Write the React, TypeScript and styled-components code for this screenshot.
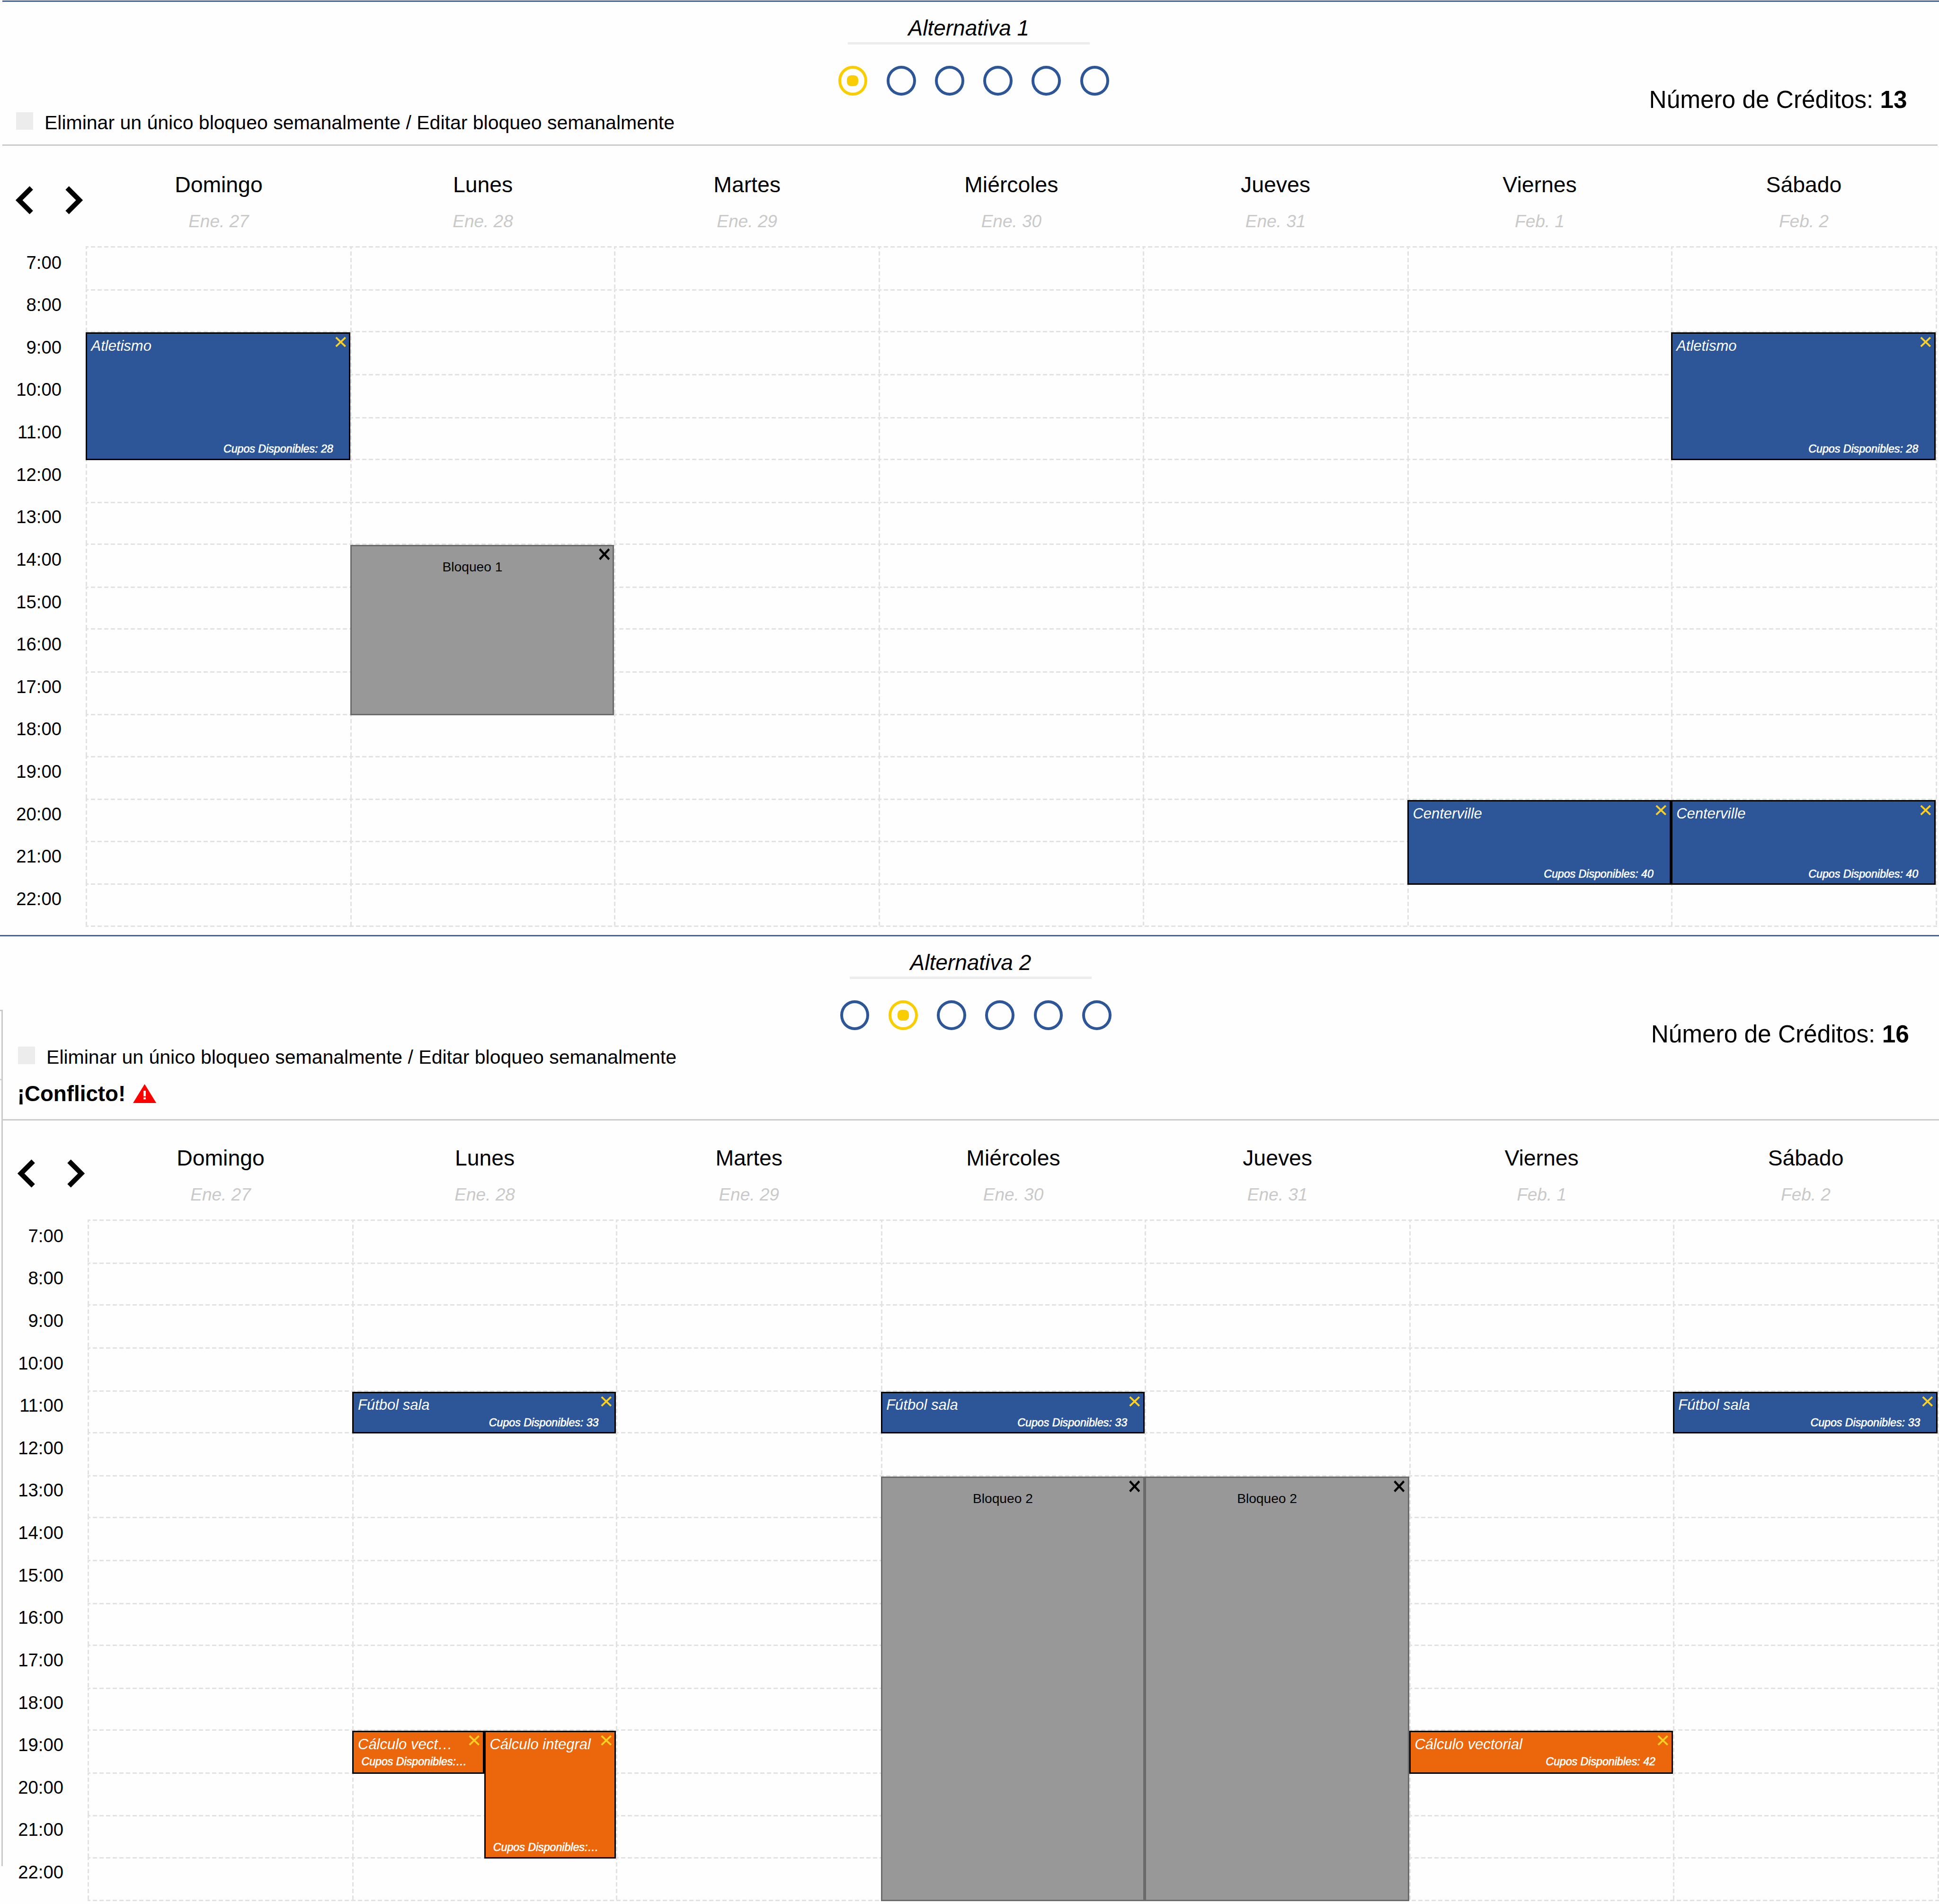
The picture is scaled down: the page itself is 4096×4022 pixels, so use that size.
import React from 'react';
import styled, { createGlobalStyle } from 'styled-components';

const K = 4096 / 4507;
const px = (n: number) => `${+(n * K).toFixed(2)}px`;

const COLORS = {
  blue: '#2c5697',
  rule: '#3e65a5',
  yellow: '#f9cd00',
  close: '#fbd022',
  orange: '#ec670c',
  gray: '#989898',
  grayEdge: '#6b6b6b',
  line: '#cacaca',
  grid: '#e2e2e2',
  soft: '#ececec',
};

const DAY_TRACKS = [615.6, 612.6, 615.6, 613, 615.3, 612.6, 615.3].map(px).join(' ');

const GlobalStyle = createGlobalStyle`
  html, body { margin: 0; padding: 0; background: #fefefe; }
  body { overflow: hidden; }
  * { box-sizing: border-box; }
`;

const Page = styled.main`
  width: 4096px;
  height: 4022px;
  overflow: hidden;
  position: relative;
  padding-top: 1px;
  background: #fefefe;
  color: #000;
  font-family: 'Liberation Sans', Arial, sans-serif;
  white-space: nowrap;
`;

const Section = styled.section<{ $inset: number; $height: number }>`
  height: ${(p) => px(p.$height)};
  padding-left: ${(p) => px(p.$inset)};
`;

const TopRule = styled.div<{ $bleed: number }>`
  height: 3px;
  margin-left: ${(p) => px(-p.$bleed)};
  background: ${COLORS.rule};
`;

const Header = styled.header<{ $height: number; $shift: number }>`
  display: grid;
  grid-template-columns: 1fr auto 1fr;
  width: ${(p) => px(4498.5 + p.$shift)};
  height: ${(p) => px(p.$height)};
  padding-left: ${(p) => px(p.$shift)};
  border-bottom: 3px solid ${COLORS.line};
`;

const Options = styled.div`
  display: flex;
  flex-direction: column;
  padding: ${px(250.7)} 0 0 ${px(32)};
`;

const CheckRow = styled.label`
  display: flex;
  align-items: flex-start;
  gap: ${px(26)};
  height: ${px(60)};
  font-size: ${px(45.12)};
  line-height: ${px(60)};
`;

const CheckBox = styled.span`
  width: ${px(40)};
  height: ${px(41)};
  margin-top: ${px(5.5)};
  background: ${COLORS.soft};
`;

const ConflictRow = styled.div`
  display: flex;
  align-items: flex-start;
  gap: ${px(17)};
  margin: ${px(20.5)} 0 0 ${px(-1.5)};
  font-size: ${px(50.3)};
  font-weight: 700;
  line-height: ${px(70)};
  svg {
    width: ${px(54)};
    height: ${px(44)};
    margin-top: ${px(12.5)};
  }
`;

const Picker = styled.div`
  display: flex;
  flex-direction: column;
  align-items: center;
  margin-right: ${px(6)};
`;

const PlanName = styled.h2`
  width: ${px(562.5)};
  margin: ${px(29)} 0 0;
  border-bottom: ${px(6.3)} solid ${COLORS.soft};
  font-size: ${px(50.6)};
  font-style: italic;
  font-weight: 400;
  line-height: ${px(65)};
  text-align: center;
`;

const Radios = styled.div`
  display: flex;
  gap: ${px(44.5)};
  margin: ${px(49)} 0 0 ${px(23.5)};
`;

const Radio = styled.span<{ $on: boolean }>`
  display: grid;
  place-items: center;
  width: ${px(68)};
  height: ${px(69)};
  border: ${px(6.6)} solid ${(p) => (p.$on ? COLORS.yellow : COLORS.blue)};
  border-radius: 50%;
  &::after {
    content: '';
    width: ${px(26.5)};
    height: ${px(25)};
    border-radius: 38%;
    background: ${(p) => (p.$on ? COLORS.yellow : 'transparent')};
  }
`;

const Credits = styled.p`
  margin: 0;
  padding: ${px(188)} ${px(71)} 0 0;
  font-size: ${px(56.5)};
  line-height: ${px(80)};
  text-align: right;
`;

const DayBar = styled.div<{ $height: number; $shift: number }>`
  display: grid;
  grid-template-columns: ${px(193.6)} ${DAY_TRACKS};
  align-items: end;
  height: ${(p) => px(p.$height)};
  padding-left: ${(p) => px(p.$shift)};
`;

const Arrows = styled.nav`
  display: flex;
  justify-content: space-between;
  padding: 0 ${px(6.6)} ${px(72.5)} ${px(31)};
  svg {
    width: ${px(42)};
    height: ${px(68)};
  }
`;

const Day = styled.div`
  padding: 0 0 ${px(27)} ${px(3)};
  text-align: center;
`;

const DayName = styled.div`
  font-size: ${px(51)};
  line-height: ${px(70)};
`;

const DayDate = styled.div`
  margin-top: ${px(20)};
  color: #c9c9c9;
  font-size: ${px(40.7)};
  font-style: italic;
  line-height: ${px(60)};
`;

const Body = styled.div<{ $shift: number }>`
  display: flex;
  align-items: flex-start;
  padding-left: ${(p) => px(p.$shift)};
`;

const Hours = styled.div`
  width: ${px(193.6)};
  padding: ${px(8.6)} ${px(56)} 0 0;
  text-align: right;
`;

const Hour = styled.div`
  height: ${px(98.63)};
  font-size: ${px(42.1)};
  line-height: ${px(60)};
`;

const dash = (dir: string) =>
  `repeating-linear-gradient(${dir}, ${COLORS.grid} 0 6px, transparent 6px 11px, ${COLORS.grid} 11px 14px)`;

const Board = styled.div<{ $rows: number[] }>`
  display: grid;
  grid-template-columns: ${DAY_TRACKS};
  grid-template-rows: ${(p) => p.$rows.map(px).join(' ')};
  padding: 0 3px 3px 0;
  background:
    ${dash('90deg')} left bottom / 100% 3px no-repeat,
    ${dash('180deg')} right top / 3px 100% no-repeat;
`;

const Cell = styled.div<{ $day: number; $hour: number }>`
  grid-column: ${(p) => p.$day};
  grid-row: ${(p) => p.$hour};
  background:
    ${dash('90deg')} left top / 100% 3px no-repeat,
    ${dash('180deg')} left top / 3px 100% no-repeat;
`;

type Kind = 'blue' | 'orange' | 'gray';
type Half = 'left' | 'right' | undefined;

const EventBox = styled.article<{ $day: number; $from: number; $span: number; $kind: Kind; $half: Half }>`
  grid-column: ${(p) => p.$day};
  grid-row: ${(p) => p.$from} / span ${(p) => p.$span};
  display: grid;
  grid-template-columns: minmax(0, 1fr) ${px(28)};
  grid-template-rows: ${px(40)} 1fr;
  justify-self: ${(p) => (p.$half ? (p.$half === 'left' ? 'start' : 'end') : 'stretch')};
  width: ${(p) => (p.$half ? '50%' : 'auto')};
  min-width: 0;
  margin: 3px 0 -3px;
  padding: ${px(6.8)} ${px(5.5)} 0 ${px(9.5)};
  border: 3px solid ${(p) => (p.$kind === 'gray' ? COLORS.grayEdge : '#000')};
  background: ${(p) => COLORS[p.$kind]};
  color: ${(p) => (p.$kind === 'gray' ? '#000' : '#fff')};
  svg {
    width: ${px(28)};
    height: ${(p) => px(p.$kind === 'gray' ? 28 : 25)};
    margin-top: ${(p) => px(p.$kind === 'gray' ? -1.5 : 0)};
  }
`;

const EventName = styled.h3`
  margin: 0;
  padding-top: ${px(1.8)};
  font-size: ${px(34.1)};
  font-style: italic;
  font-weight: 400;
  line-height: ${px(40)};
`;

const Seats = styled.p<{ $raise: number }>`
  grid-column: 1 / -1;
  align-self: end;
  margin: 0;
  padding: 0 ${px(31.5)} ${(p) => px(p.$raise)} 0;
  font-size: ${px(25.5)};
  font-style: italic;
  line-height: ${px(30)};
  text-align: right;
  -webkit-text-stroke: 0.7px #fff;
`;

const BlockName = styled.h3`
  margin: 0;
  padding: ${px(21)} ${px(21.5)} 0 0;
  font-size: ${px(31)};
  font-weight: 400;
  line-height: ${px(40)};
  text-align: center;
`;

const FrameEdge = styled.div`
  position: absolute;
  left: 0;
  top: ${px(2347.5)};
  width: ${px(6.4)};
  height: ${px(1990)};
  border: solid ${COLORS.line};
  border-width: 3px 3px 0 0;
`;

const FrameTick = styled.div`
  width: 3px;
  height: 3px;
  margin-top: ${px(157)};
  background: #d4d4d4;
`;

const Chevron = ({ flip }: { flip?: boolean }) => (
  <svg viewBox="0 0 42 68" preserveAspectRatio="none" aria-hidden>
    <path
      d={flip ? 'M5.5 5.5 L34 34 L5.5 62.5' : 'M36.5 5.5 L8 34 L36.5 62.5'}
      fill="none"
      stroke="#000"
      strokeWidth="11.4"
    />
  </svg>
);

const Warning = () => (
  <svg viewBox="0 0 54 44" preserveAspectRatio="none" aria-hidden>
    <path d="M27 0 L54 44 H0 Z" fill="#f00" />
    <path d="M24.3 15.5 h5.4 v13 h-5.4 z M24.3 31 h5.4 v4.5 h-5.4 z" fill="#fff" />
  </svg>
);

const Close = ({ kind }: { kind: Kind }) => (
  <svg viewBox="0 0 28 25" preserveAspectRatio="none" aria-hidden>
    <path
      d="M3 2 L25 23 M25 2 L3 23"
      fill="none"
      stroke={kind === 'gray' ? '#000' : COLORS.close}
      strokeWidth={kind === 'gray' ? 4.8 : 4.2}
    />
  </svg>
);

interface Entry {
  day: number;
  from: number;
  to: number;
  kind: Kind;
  name: string;
  seats?: string;
  half?: Half;
}

interface Plan {
  index: number;
  credits: number;
  conflict?: boolean;
  inset: number;
  shift: number;
  height: number;
  headerHeight: number;
  dayBarHeight: number;
  rows: number[];
  entries: Entry[];
}

const DAYS: [string, string][] = [
  ['Domingo', 'Ene. 27'],
  ['Lunes', 'Ene. 28'],
  ['Martes', 'Ene. 29'],
  ['Miércoles', 'Ene. 30'],
  ['Jueves', 'Ene. 31'],
  ['Viernes', 'Feb. 1'],
  ['Sábado', 'Feb. 2'],
];

const FIRST_HOUR = 7;

const PLANS: Plan[] = [
  {
    index: 1,
    credits: 13,
    inset: 5.4,
    shift: 0,
    height: 2172,
    headerHeight: 334.5,
    dayBarHeight: 233,
    rows: [100, 97, 100, 100, 97, 100, 97, 100, 97, 100, 100, 97, 100, 97, 100, 97],
    entries: [
      { day: 1, from: 9, to: 12, kind: 'blue', name: 'Atletismo', seats: 'Cupos Disponibles: 28' },
      { day: 7, from: 9, to: 12, kind: 'blue', name: 'Atletismo', seats: 'Cupos Disponibles: 28' },
      { day: 2, from: 14, to: 18, kind: 'gray', name: 'Bloqueo 1' },
      { day: 6, from: 20, to: 22, kind: 'blue', name: 'Centerville', seats: 'Cupos Disponibles: 40' },
      { day: 7, from: 20, to: 22, kind: 'blue', name: 'Centerville', seats: 'Cupos Disponibles: 40' },
    ],
  },
  {
    index: 2,
    credits: 16,
    conflict: true,
    inset: 6.4,
    shift: 3.5,
    height: 2260,
    headerHeight: 428.3,
    dayBarHeight: 229.7,
    rows: [100, 97, 100, 100, 97, 100, 97, 100, 100, 97, 100, 97, 100, 100, 97, 99],
    entries: [
      { day: 2, from: 11, to: 12, kind: 'blue', name: 'Fútbol sala', seats: 'Cupos Disponibles: 33' },
      { day: 4, from: 11, to: 12, kind: 'blue', name: 'Fútbol sala', seats: 'Cupos Disponibles: 33' },
      { day: 7, from: 11, to: 12, kind: 'blue', name: 'Fútbol sala', seats: 'Cupos Disponibles: 33' },
      { day: 4, from: 13, to: 23, kind: 'gray', name: 'Bloqueo 2' },
      { day: 5, from: 13, to: 23, kind: 'gray', name: 'Bloqueo 2' },
      { day: 2, from: 19, to: 20, kind: 'orange', name: 'Cálculo vect…', seats: 'Cupos Disponibles:…', half: 'left' },
      { day: 2, from: 19, to: 22, kind: 'orange', name: 'Cálculo integral', seats: 'Cupos Disponibles:…', half: 'right' },
      { day: 6, from: 19, to: 20, kind: 'orange', name: 'Cálculo vectorial', seats: 'Cupos Disponibles: 42' },
    ],
  },
];

const EventCard = ({ entry }: { entry: Entry }) => (
  <EventBox
    $day={entry.day}
    $from={entry.from - FIRST_HOUR + 1}
    $span={entry.to - entry.from}
    $kind={entry.kind}
    $half={entry.half}
  >
    {entry.kind === 'gray' ? <BlockName>{entry.name}</BlockName> : <EventName>{entry.name}</EventName>}
    <Close kind={entry.kind} />
    {entry.seats && <Seats $raise={entry.from === 19 && entry.to === 20 ? 9 : 6.5}>{entry.seats}</Seats>}
  </EventBox>
);

const PlanSection = ({ plan }: { plan: Plan }) => (
  <Section $inset={plan.inset} $height={plan.height}>
    <TopRule $bleed={plan.conflict ? plan.inset : 0} />
    <Header $height={plan.headerHeight} $shift={plan.shift}>
      <Options>
        <CheckRow>
          <CheckBox />
          Eliminar un único bloqueo semanalmente / Editar bloqueo semanalmente
        </CheckRow>
        {plan.conflict && (
          <ConflictRow>
            ¡Conflicto!
            <Warning />
          </ConflictRow>
        )}
      </Options>
      <Picker>
        <PlanName>Alternativa {plan.index}</PlanName>
        <Radios>
          {[1, 2, 3, 4, 5, 6].map((n) => (
            <Radio key={n} $on={n === plan.index} />
          ))}
        </Radios>
      </Picker>
      <Credits>
        Número de Créditos: <b>{plan.credits}</b>
      </Credits>
    </Header>
    <DayBar $height={plan.dayBarHeight} $shift={plan.shift}>
      <Arrows>
        <Chevron />
        <Chevron flip />
      </Arrows>
      {DAYS.map(([name, date]) => (
        <Day key={name}>
          <DayName>{name}</DayName>
          <DayDate>{date}</DayDate>
        </Day>
      ))}
    </DayBar>
    <Body $shift={plan.shift}>
      <Hours>
        {plan.rows.map((_, i) => (
          <Hour key={i}>{FIRST_HOUR + i}:00</Hour>
        ))}
      </Hours>
      <Board $rows={plan.rows}>
        {plan.rows.flatMap((_, r) => DAYS.map((__, d) => <Cell key={`${r}-${d}`} $day={d + 1} $hour={r + 1} />))}
        {plan.entries.map((entry, i) => (
          <EventCard key={i} entry={entry} />
        ))}
      </Board>
    </Body>
  </Section>
);

export default function App() {
  return (
    <>
      <GlobalStyle />
      <Page>
        {PLANS.map((plan) => (
          <PlanSection key={plan.index} plan={plan} />
        ))}
        <FrameEdge>
          <FrameTick />
        </FrameEdge>
      </Page>
    </>
  );
}
